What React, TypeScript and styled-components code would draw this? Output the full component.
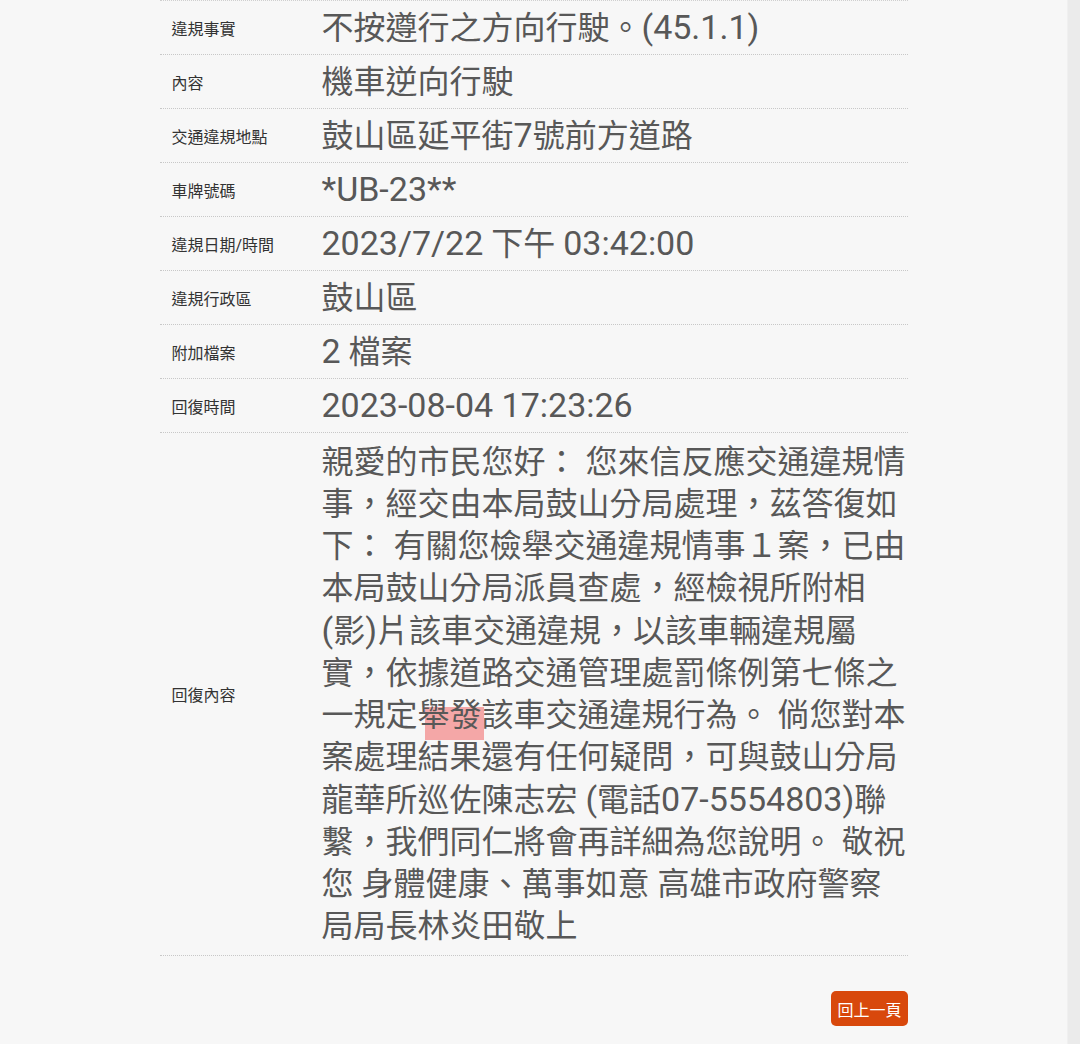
import React from "react";
import styled, { createGlobalStyle } from "styled-components";

const GlobalStyle = createGlobalStyle`
  html, body { margin: 0; padding: 0; background: #f7f7f7; }
  body { font-family: Roboto, "Noto Sans CJK TC", "Noto Sans", sans-serif; }
`;

const Page = styled.div`
  display: flex;
  min-height: 1044px;
`;

const Main = styled.main`
  flex: 1;
  background: #f7f7f7;
`;

const SideStrip = styled.div`
  width: 12px;
  background: #ebebeb;
  border-left: 1px solid #f0f0f0;
`;

const Table = styled.div`
  width: 748px;
  margin: 0 auto;
  border-top: 1px dotted #cfcfcf;
`;

const Row = styled.div<{ $tall?: boolean }>`
  display: grid;
  grid-template-columns: 162px 586px;
  align-items: center;
  min-height: 54px;
  border-bottom: 1px dotted #c8c8c8;
  padding: ${(p) => (p.$tall ? "8px 0 8px" : "0")};
  box-sizing: border-box;
`;

const Label = styled.div`
  padding-left: 12px;
  font-size: 16px;
  color: #333333;
`;

const Value = styled.div`
  font-size: 32px;
  line-height: 42px;
  color: #585858;
  word-break: normal;
  line-break: strict;
`;

const Latin = styled.span`
  font-size: 34px;
  line-height: 42px;
`;

const Mark = styled.span`
  position: relative;
  isolation: isolate;
  &::before {
    content: "";
    position: absolute;
    left: 7px;
    right: -2px;
    top: 11px;
    bottom: -6px;
    background: #f4a7a7;
    z-index: -1;
  }
`;

const Footer = styled.div`
  width: 748px;
  margin: 35px auto 0;
  display: flex;
  justify-content: flex-end;
`;

const BackButton = styled.button`
  height: 35px;
  padding: 0 6px;
  border: none;
  border-radius: 5px;
  background: #d8480c;
  color: #fff;
  font-family: inherit;
  font-size: 16px;
  cursor: pointer;
`;

function Text({ children }: { children: string }) {
  const parts = children.split(/([!-~]+(?: [!-~]+)*)/);
  return (
    <>
      {parts.map((part, i) =>
        i % 2 === 1 ? <Latin key={i}>{part}</Latin> : <React.Fragment key={i}>{part}</React.Fragment>
      )}
    </>
  );
}

const rows: [string, string][] = [
  ["違規事實", "不按遵行之方向行駛。(45.1.1)"],
  ["內容", "機車逆向行駛"],
  ["交通違規地點", "鼓山區延平街7號前方道路"],
  ["車牌號碼", "*UB-23**"],
  ["違規日期/時間", "2023/7/22 下午 03:42:00"],
  ["違規行政區", "鼓山區"],
  ["附加檔案", "2 檔案"],
  ["回復時間", "2023-08-04 17:23:26"],
];

export default function App() {
  return (
    <>
      <GlobalStyle />
      <Page>
        <Main>
          <Table>
            {rows.map(([label, value]) => (
              <Row key={label}>
                <Label>{label}</Label>
                <Value>
                  <Text>{value}</Text>
                </Value>
              </Row>
            ))}
            <Row $tall>
              <Label>回復內容</Label>
              <Value>
                <Text>
                  {"親愛的市民您好： 您來信反應交通違規情事，經交由本局鼓山分局處理，茲答復如下： 有關您檢舉交通違規情事１案，已由本局鼓山分局派員查處，經檢視所附相(影)片該車交通違規，以該車輛違規屬實，依據道路交通管理處罰條例第七條之一規定"}
                </Text>
                <Mark>舉發</Mark>
                <Text>
                  {"該車交通違規行為。 倘您對本案處理結果還有任何疑問，可與鼓山分局龍華所巡佐陳志宏 (電話07-5554803)聯繫，我們同仁將會再詳細為您說明。 敬祝您 身體健康、萬事如意 高雄市政府警察局局長林炎田敬上"}
                </Text>
              </Value>
            </Row>
          </Table>
          <Footer>
            <BackButton type="button">回上一頁</BackButton>
          </Footer>
        </Main>
        <SideStrip />
      </Page>
    </>
  );
}
